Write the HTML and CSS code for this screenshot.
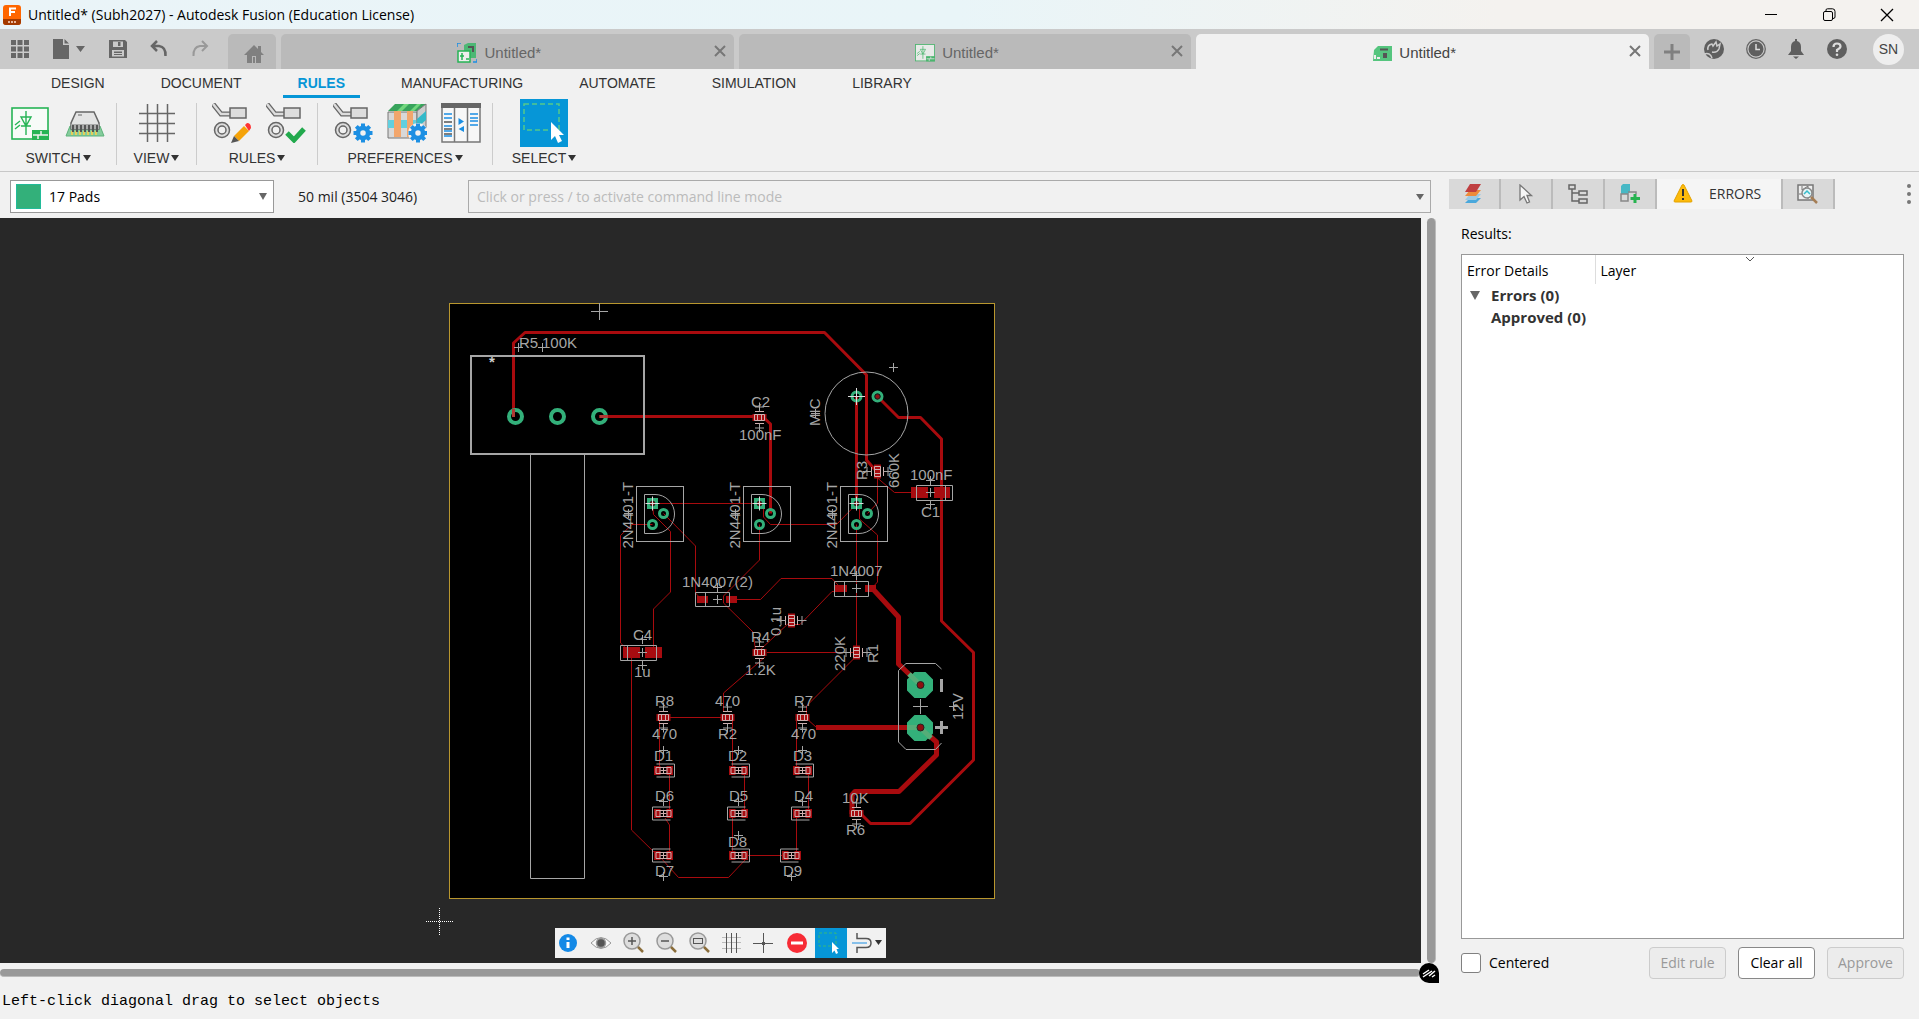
FILE: index.html
```html
<!DOCTYPE html>
<html lang="en">
<head>
<meta charset="utf-8">
<title>Untitled* (Subh2027) - Autodesk Fusion (Education License)</title>
<link rel="stylesheet" href="styles.css">
</head>
<body>
<svg class="defs" aria-hidden="true">
  <defs>
    <g id="gear"><circle r="5" fill="none" stroke="#1c8fe3" stroke-width="4.5"/><g stroke="#1c8fe3" stroke-width="4"><path d="M0-9.500V-6M0 6V9.500M-9.500 0H-6M6 0H9.500M-6.700-6.700L-4.300-4.300M6.700 6.700L4.300 4.300M-6.700 6.700L-4.300 4.300M6.700-6.700L4.300-4.300"/></g></g>
    <g id="trace-pad"><path d="M1 1L9 11H19" fill="none" stroke="#666" stroke-width="5"/><path d="M1 1L9 11H19" fill="none" stroke="#ddd" stroke-width="2.500"/><rect x="18" y="5" width="16" height="10" fill="#ddd" stroke="#666" stroke-width="1.500"/><circle cx="10" cy="27" r="7.500" fill="#ddd" stroke="#666" stroke-width="1.500"/><circle cx="10" cy="27" r="4" fill="#f1f1f1" stroke="#666" stroke-width="1.500"/></g>
    <g id="schematic"><rect x="1" y="1" width="36" height="31" fill="#f7fbf8" stroke="#26b455" stroke-width="1.600"/><path d="M15 4V28M10 10H20L15 19ZM10 19H20M9 14L4 18M9 18L4 22" fill="none" stroke="#26b455" stroke-width="1.400"/><rect x="21" y="23" width="17" height="10" fill="#26b455"/><path d="M22 28H37M30 24V28M27 28V32" stroke="#f1f1f1" stroke-width="1.500"/></g>
    <g id="cross"><path d="M-4.500 0H4.500M0-4.500V4.500"/></g>
    <g id="smd"><rect class="copper" x="-7" y="-3.500" width="14" height="7"/><path class="body" d="M-5-3H5V3H-5ZM-2-3V3M2-3V3M-4.500-6H4.500M-4.500 6H4.500"/><use href="#cross" y="-10.500"/><use href="#cross" y="10.500"/></g>
    <g id="led"><path class="copper" d="M-9.500-4.500H-3V4.500H-9.500ZM3-4.500H9.500V4.500H3Z"/><path class="body" d="M-7.500-3H7.500V3H-7.500ZM-3.500-3V3M3.500-3V3M-3 0H3M0-3V3"/><path d="M-7-6.500H11V6.500H-7"/></g>
    <g id="transistor"><rect x="-16" y="-17" width="47" height="55"/><path d="M2.500-9H-8V30H2.500A19.500 19.500 0 0 0 2.500-9Z"/><g class="ring small"><circle cx="11" cy="10" r="4"/><circle cy="21" r="4"/></g><rect class="pad" x="-5.500" y="-5.500" width="11" height="11"/><circle class="hole" r="2.500"/><path class="bright" d="M-7 0H7M0-7V7"/><use href="#cross" x="-24" y="10"/><text transform="translate(-20 45) rotate(-90)">2N4401-T</text></g>
    <g id="lens"><circle cx="10" cy="10" r="8" fill="#ddd" stroke="#999" stroke-width="1.500"/><path d="M16 16L21 21" stroke="#8a6d3b" stroke-width="2.500"/></g>
  </defs>
</svg>

<header>
  <div class="titlebar">
    <svg class="logo" width="18" height="20" viewBox="0 0 18 20"><rect width="18" height="20" rx="3" fill="#f60"/><path d="M0 14H18V17Q18 20 15 20H3Q0 20 0 17Z" fill="#a33a00"/><path d="M7 11V3.500H13M7 7H12" stroke="#fff" stroke-width="2" fill="none"/><path d="M5 17H13" stroke="#e8b79c" stroke-width="2" stroke-dasharray="2 1"/></svg>
    <h1>Untitled* (Subh2027) - Autodesk Fusion (Education License)</h1>
    <button aria-label="Minimize"><svg width="14" height="14"><path d="M1 6.500H13" stroke="#000"/></svg></button>
    <button aria-label="Restore"><svg width="14" height="14" fill="none" stroke="#000"><rect x="1.500" y="3.500" width="9" height="9" rx="1.500"/><path d="M4 3V2Q4 .8 5.500 .8H10.500Q13 .8 13 3.500V9Q13 10.500 11 10.500"/></svg></button>
    <button aria-label="Close"><svg width="14" height="14"><path d="M1 1L13 13M13 1L1 13" stroke="#000" stroke-width="1.300"/></svg></button>
  </div>

  <div class="tabbar">
    <div class="quick">
      <button aria-label="Data panel"><svg width="18" height="18" fill="#666"><path d="M0 0H5V5H0ZM6.500 0H11.500V5H6.500ZM13 0H18V5H13ZM0 6.500H5V11.500H0ZM6.500 6.500H11.500V11.500H6.500ZM13 6.500H18V11.500H13ZM0 13H5V18H0ZM6.500 13H11.500V18H6.500ZM13 13H18V18H13Z"/></svg></button>
      <button aria-label="File"><svg width="34" height="20" fill="#666"><path d="M1 0H11V6H17V20H1ZM12.500 0L17 4.500H12.500ZM24 7H33L28.500 13Z"/></svg></button>
      <button aria-label="Save"><svg width="18" height="18" fill="#666"><path fill-rule="evenodd" d="M0 0H16L18 2V18H0ZM4 1.500V7H14V1.500ZM3 10V16.500H15V10ZM9 2H11.500V6H9ZM5 11.500H13V13H5ZM5 14H13V15H5Z"/></svg></button>
      <button aria-label="Undo"><svg width="18" height="18" fill="none" stroke="#666" stroke-width="2.500"><path d="M7 1L2 6L7 11M2 6H9Q16 7 15.500 16"/></svg></button>
      <button aria-label="Redo"><svg width="18" height="18" fill="none" stroke="#999" stroke-width="2"><path d="M11 1L16 6L11 11M16 6H9Q2 7 2.500 16"/></svg></button>
    </div>
    <button class="home" aria-label="Home"><svg width="20" height="18" fill="#808080"><path d="M10 0L14 4V1H17V7L20 10H17V18H12V11H8V18H3V10H0ZM9 12H11V18H9Z"/></svg></button>
    <div class="tab"><span><svg width="20" height="20"><path d="M7 2L11 0H19V15H7Z" fill="#4db875"/><path d="M11 4H16V9" stroke="#555" stroke-width="2" fill="none"/><rect x="1" y="8" width="12" height="11" fill="#eee" stroke="#26b455" stroke-width="1.500"/><path d="M5 10V17M3 13H7M9 16H12" stroke="#26b455" stroke-width="1.500"/><path d="M0 4V0H4M20 16V19H16" stroke="#1c8fe3" stroke-width="1.500" fill="none"/></svg>Untitled*</span><button aria-label="Close tab"><svg width="12" height="12"><path d="M1 1L11 11M11 1L1 11"/></svg></button></div>
    <div class="tab"><span><svg width="20" height="18" viewBox="0 0 38 34" opacity=".75"><use href="#schematic"/></svg>Untitled*</span><button aria-label="Close tab"><svg width="12" height="12"><path d="M1 1L11 11M11 1L1 11"/></svg></button></div>
    <div class="tab active"><span><svg width="19" height="15"><path d="M1 4L5 0H19V15H0Z" fill="#55c57e"/><path d="M7 3.500H15" stroke="#555" stroke-width="2"/><path d="M10 7H14V12H10Z" fill="#555"/><path d="M1 9H3V13H1ZM4 11H7V13H4Z" fill="#eee"/></svg>Untitled*</span><button aria-label="Close tab"><svg width="12" height="12"><path d="M1 1L11 11M11 1L1 11"/></svg></button></div>
    <button class="add" aria-label="New tab"><svg width="18" height="18"><path d="M9 1V17M1 9H17" stroke="#808080" stroke-width="3"/></svg></button>
    <div class="account">
      <button aria-label="Extensions"><svg width="20" height="20"><circle cx="10" cy="10" r="10" fill="#5f5f5f"/><path d="M0 15Q6 13 8 19" stroke="#ccc" stroke-width="1.500" fill="none"/><path d="M4 11Q3 6 8 5L9 7L12 3L13 7L16 5L15 10Q13 14 8 13" stroke="#ccc" stroke-width="1.500" fill="none"/></svg></button>
      <button aria-label="Job status"><svg width="20" height="20"><circle cx="10" cy="10" r="9.300" fill="none" stroke="#666" stroke-width="1.300"/><circle cx="10" cy="10" r="7.500" fill="#5f5f5f"/><path d="M10 5V10.500H14" stroke="#ddd" stroke-width="1.500" fill="none"/></svg></button>
      <button aria-label="Notifications"><svg width="18" height="20" fill="#5f5f5f"><path d="M8 2V0H10V2Q14 3 14 8V12L17 16H1L4 12V8Q4 3 8 2ZM6 17.500H12L9 20Z"/></svg></button>
      <button aria-label="Help"><svg width="20" height="20"><circle cx="10" cy="10" r="10" fill="#5f5f5f"/><path d="M6.500 8Q6.500 4.500 10 4.500T13.500 7.500Q13.500 9 10 11V13" stroke="#ddd" stroke-width="2.200" fill="none"/><circle cx="10" cy="15.800" r="1.300" fill="#ddd"/></svg></button>
      <button class="avatar">SN</button>
    </div>
  </div>

  <nav>
    <a href="#design">DESIGN</a><a href="#document">DOCUMENT</a><a href="#rules" class="current">RULES</a><a href="#manufacturing">MANUFACTURING</a><a href="#automate">AUTOMATE</a><a href="#simulation">SIMULATION</a><a href="#library">LIBRARY</a>
  </nav>

  <div class="ribbon">
    <section class="g-switch">
      <div>
        <button aria-label="Schematic"><svg width="40" height="40"><g transform="translate(0 4)"><use href="#schematic"/></g></svg></button>
        <button aria-label="Package"><svg width="40" height="40"><path d="M5 23H35L39 33H1Z" fill="#84cc9c" stroke="#5eb37b"/><path d="M6 30H34" stroke="#e5cf5b" stroke-width="4" stroke-dasharray="2 2"/><path d="M11 9H29L34 20V26H6V20Z" fill="#e4e4e4" stroke="#666" stroke-width="1.500"/><path d="M6 21H34V26H6Z" fill="#aaa"/><path d="M8 22V29M12 22V29M16 22V29M20 22V29M24 22V29M28 22V29M32 22V29" stroke="#555" stroke-width="2"/><path d="M13 12H17" stroke="#666"/></svg></button>
      </div>
      <button class="menu">SWITCH<i></i></button>
    </section>
    <section class="g-view">
      <div><button aria-label="Grid"><svg width="40" height="40"><path d="M10.500 1V39M20.500 1V39M30.500 1V39M2 10.500H38M2 20.500H38M2 30.500H38" stroke="#666" stroke-width="1.500"/></svg></button></div>
      <button class="menu">VIEW<i></i></button>
    </section>
    <section class="g-rules">
      <div>
        <button aria-label="Edit rules"><svg width="40" height="40"><use href="#trace-pad"/><path d="M22 33L32 23L37 28L27 38Z" fill="#f5a30a"/><path d="M33 22L35 20Q39 20 39 25L37 28Z" fill="#f33"/><path d="M22 33L27 38L19 40Z" fill="#555"/></svg></button>
        <button aria-label="Check rules"><svg width="40" height="40"><use href="#trace-pad"/><path d="M21 30L28 37L38 26" stroke="#22a94d" stroke-width="5" fill="none"/></svg></button>
      </div>
      <button class="menu">RULES<i></i></button>
    </section>
    <section class="g-prefs">
      <div>
        <button aria-label="Rule preferences"><svg width="40" height="40"><use href="#trace-pad"/><use href="#gear" x="30" y="30"/></svg></button>
        <button aria-label="Layer stack"><svg width="40" height="40"><path d="M1 9H30V35H1Z" fill="#d8d8d8" stroke="#777"/><path d="M1 17H30V25H1Z" fill="#61cfdf"/><path d="M1 8L8 1H39L30 8Z" fill="#38a45c"/><path d="M10 8L17 1H22L15 8ZM23 8L30 1H34L27 8Z" fill="#72d77e"/><path d="M30 8L39 1V28L30 35Z" fill="#ccc" stroke="#777"/><path d="M30 16L39 8V17L30 25Z" fill="#33b9c9"/><path d="M7 8H14V34H7ZM20 8H26V34H20Z" fill="#f2a66c"/><circle cx="31" cy="30" r="10" fill="#f1f1f1"/><use href="#gear" x="31" y="30"/></svg></button>
        <button aria-label="Design manager"><svg width="40" height="40"><path d="M1 1H39V39H1Z" fill="#f7f7f7" stroke="#777" stroke-width="1.500"/><path d="M0 0H40V5H0Z" fill="#666"/><path d="M13.500 5V39M26.500 5V39" stroke="#777" stroke-width="1.500"/><path d="M3 11H11M3 15H11M3 23H11M3 28H11M3 33H11M29 11H37M29 15H37M29 18H37M29 22H37" stroke="#1c8fe3" stroke-width="1.500"/><path d="M3 19H11M3 26H11M3 31H11" stroke="#555" stroke-width="1.500"/><path d="M17.500 15L23 18.500L17.500 22ZM23 23V29L17.500 26Z" fill="#1c8fe3"/></svg></button>
      </div>
      <button class="menu">PREFERENCES<i></i></button>
    </section>
    <section class="g-select">
      <div><button class="selected" aria-label="Select"><svg width="48" height="48"><rect x="4" y="5" width="35" height="26" fill="none" stroke="#55c98a" stroke-width="1.500" stroke-dasharray="5 3"/><path d="M31 23V41L35 37L38 44L42 42L39 36H44Z" fill="#fff"/></svg></button></div>
      <button class="menu">SELECT<i></i></button>
    </section>
  </div>
</header>

<main>
  <div class="workspace">
    <div class="command">
      <label class="layer"><b></b><select aria-label="Layer"><option>17 Pads</option></select></label>
      <output>50 mil (3504 3046)</output>
      <div class="cli"><input aria-label="Command line" placeholder="Click or press / to activate command line mode"><i></i></div>
    </div>
    <div class="viewport">
      <div class="canvas">
        <svg class="board" viewBox="0 218 1421 745" role="img" aria-label="Circuit board layout">
          <rect x="449.500" y="303.500" width="545" height="595" fill="#000" stroke="#b8962e"/>
          <g class="wire">
            <path d="M652.500 503.500H759.500M652.500 503.500L653.500 514.500L670.500 531.500V592L653.500 609V650M652.500 524.500H632L620.500 535.500V643L630 652M663.500 513.500L695.500 546V593L702 600"/>
            <path d="M759.500 503.500L763.500 508V517L770.500 524.500H836.500L856.500 504M759.500 524.500V560L723.500 596V603L753 632L755.500 650M877.500 478L894.500 492.500H912M877.500 477V503L867.500 513.500M856.500 506L859.500 509V519L877.500 535V582L872 588M856.500 524.500V652"/>
            <path d="M737 599.500H760.500L781 578.500H832L838 585M791 624.500H800L832 591.500H838M760 650L791.500 620.500M767 652.500H856M765 657L723.500 693V712M856.500 656L806.500 706V714M806 718L816.500 727.500M631.500 656V830L657 855"/>
            <path d="M663.500 717.500H728M659.500 717V768M669.500 772V812M665 818L669.500 825V855M661 858L678.500 877.500H728.500L746 859M732.500 717V768M744.500 772V812M732.500 816V855M746 855.500H784M796.500 717V768M808.500 772V812M796.500 816V853"/>
          </g>
          <g class="wire medium">
            <path d="M513.500 416.500V343L525 332.500H824.500L866.500 375V460L877 472M599.500 416.500H757M762 416L770.500 424V513.500M856.500 396.500V503.500"/>
            <path d="M877.500 396.500L898.500 417.500H920.500L941.500 439V621L973.500 652.500V760L910 823.500H870.500L859 812"/>
          </g>
          <path class="wire thick" d="M872 588L898.500 617V664L920.500 685M816 727.500H920L936.500 742V755L899 791.500H855L852 795V814"/>
          <g class="silk">
            <g class="ring"><circle cx="515.500" cy="416.500" r="6.500"/><circle cx="557.500" cy="416.500" r="6.500"/><circle cx="599.500" cy="416.500" r="6.500"/></g>
            <path class="wire medium over" d="M513.500 409V417M599.500 416.500H608"/>
            <path d="M599.500 303V320M591 311.500H608M530.500 454V878.500H584.500V454"/>
            <rect class="heavy" x="471" y="356" width="173" height="98"/>
            <use href="#cross" x="518.500" y="347.500"/><use href="#cross" x="542.500" y="347.500"/>
            <text x="519" y="348">R5</text><text x="542" y="348">100K</text><text class="pin" x="489" y="367">*</text>

            <use href="#transistor" x="652.500" y="503.500"/><use href="#transistor" x="759.500" y="503.500"/><use href="#transistor" x="856.500" y="503.500"/>

            <circle cx="866.500" cy="413.500" r="41.500"/><use href="#cross" x="893.500" y="367.500"/><use href="#cross" x="815.500" y="413.500"/>
            <g class="ring mic"><circle cx="856.500" cy="396.500" r="4.500"/><circle cx="877.500" cy="396.500" r="4.500"/></g>
            <circle class="hole" cx="877.500" cy="396.500" r="2.500"/><path class="bright" d="M848 396.500H865M856.500 388V405"/>
            <text transform="translate(820 426) rotate(-90)">MIC</text>
            <use href="#smd" transform="translate(877.500 471.500) rotate(90)"/>
            <text transform="translate(867 480) rotate(-90)">R3</text><text transform="translate(899 488) rotate(-90)">660K</text>
            <use href="#smd" x="759.500" y="417.500"/><text x="751" y="407">C2</text><text x="739" y="440">100nF</text>
            <path class="copper" d="M911 487H928V498H911ZM934 487H950V498H934Z"/><path d="M916.500 485.500H952.500V500.500H916.500ZM945.500 485.500V500.500"/>
            <use href="#cross" x="930.500" y="480.500"/><use href="#cross" x="930.500" y="492.500"/><use href="#cross" x="930.500" y="504.500"/><text x="910" y="480">100nF</text><text x="921" y="517">C1</text>

            <path class="copper" d="M834 585H847V592H834ZM865 585H876V592H865ZM697 596H708V603H697ZM726 596H737V603H726Z"/>
            <path d="M834.500 581.500H868.500V596.500H834.500ZM844.500 581.500V596.500M695.500 592.500H729.500V606.500H695.500ZM705.500 592.500V606.500"/>
            <use href="#cross" x="856.500" y="588.500"/><use href="#cross" x="856.500" y="575.500"/><use href="#cross" x="717.500" y="599.500"/><use href="#cross" x="717.500" y="587.500"/>
            <text x="830" y="576">1N4007</text><text x="682" y="587">1N4007(2)</text>
            <use href="#smd" transform="translate(791.500 620.500) rotate(90)"/><text transform="translate(781 636) rotate(-90)">0.1u</text>
            <use href="#smd" x="759.500" y="652.500"/><text x="751" y="642">R4</text><text x="745" y="675">1.2K</text>
            <use href="#smd" transform="translate(856.500 652.500) rotate(90)"/><text transform="translate(878 663) rotate(-90)">R1</text><text transform="translate(845 671) rotate(-90)">220K</text>
            <path class="copper" d="M623 647H640V658H623ZM645 647H662V658H645Z"/><path d="M620.500 645.500H656.500V660.500H620.500ZM627.500 645.500V660.500"/>
            <use href="#cross" x="642.500" y="639.500"/><use href="#cross" x="642.500" y="652.500"/><use href="#cross" x="642.500" y="665.500"/><text x="633" y="640">C4</text><text x="634" y="677">1u</text>

            <use href="#smd" x="663.500" y="717.500"/><use href="#smd" x="727.500" y="717.500"/><use href="#smd" x="802.500" y="717.500"/><use href="#smd" x="856.500" y="813.500"/>
            <text x="655" y="706">R8</text><text x="652" y="739">470</text><text x="715" y="706">470</text><text x="718" y="739">R2</text><text x="794" y="706">R7</text><text x="791" y="739">470</text><text x="842" y="803">10K</text><text x="846" y="835">R6</text>
            <use href="#led" x="663.500" y="770.500"/><use href="#led" x="738.500" y="770.500"/><use href="#led" x="802.500" y="770.500"/>
            <use href="#led" transform="translate(663.500 813.500) scale(-1 1)"/><use href="#led" transform="translate(738.500 813.500) scale(-1 1)"/><use href="#led" transform="translate(802.500 813.500) scale(-1 1)"/>
            <use href="#led" transform="translate(663.500 855.500) scale(-1 1)"/><use href="#led" x="738.500" y="855.500"/><use href="#led" transform="translate(791.500 855.500) scale(-1 1)"/>
            <use href="#cross" x="663.500" y="750.500"/><use href="#cross" x="738.500" y="750.500"/><use href="#cross" x="802.500" y="750.500"/><use href="#cross" x="663.500" y="801.500"/><use href="#cross" x="738.500" y="801.500"/><use href="#cross" x="802.500" y="801.500"/><use href="#cross" x="663.500" y="876.500"/><use href="#cross" x="738.500" y="835.500"/><use href="#cross" x="791.500" y="876.500"/>
            <text x="654" y="761">D1</text><text x="728" y="761">D2</text><text x="793" y="761">D3</text><text x="655" y="801">D6</text><text x="729" y="801">D5</text><text x="794" y="801">D4</text><text x="655" y="876">D7</text><text x="728" y="847">D8</text><text x="783" y="876">D9</text>

            <path d="M941.500 669L935.500 663.500H906L898.500 670.500V742L906 749.500H935.500L941.500 743M913 706.500H928M920.500 699V714"/>
            <path class="pad" d="M914.500 672H925.500L933 679.500V690.500L925.500 698H914.500L907 690.500V679.500ZM914.500 715H925.500L933 722.500V733.500L925.500 741H914.500L907 733.500V722.500Z"/>
            <path class="through" d="M909 674L920.500 685M907 727.500H920L931 738"/>
            <circle class="hole" cx="920.500" cy="685" r="3.500"/><circle class="hole" cx="920.500" cy="727.500" r="3.500"/>
            <path class="mark" d="M941.500 679V692M941.500 721V734M935 727.500H948"/>
            <use href="#cross" x="953.500" y="706.500"/><text transform="translate(963 720) rotate(-90)">12V</text>
            <path class="pointer" d="M426 921.500H453M439.500 908V935"/>
          </g>
        </svg>
        <div class="float">
          <div>
            <button aria-label="Info"><svg width="24" height="24"><circle cx="12" cy="12" r="9" fill="#1489e6"/><path d="M12 11V17M12 6.500V9" stroke="#fff" stroke-width="3"/></svg></button>
            <button aria-label="Visibility"><svg width="24" height="24"><path d="M2 12Q12 1 22 12Q12 23 2 12Z" fill="#f8f8f8" stroke="#999"/><circle cx="12" cy="12" r="4.500" fill="#555" stroke="#999" stroke-width="1.500"/></svg></button>
            <button aria-label="Zoom in"><svg width="24" height="24"><use href="#lens" x="1"/><path d="M7 10H15M11 6V14" stroke="#555" stroke-width="1.500"/></svg></button>
            <button aria-label="Zoom out"><svg width="24" height="24"><use href="#lens" x="1"/><path d="M7 10H15" stroke="#555" stroke-width="1.500"/></svg></button>
            <button aria-label="Zoom to fit"><svg width="24" height="24"><use href="#lens" x="1"/><rect x="6.500" y="7.500" width="9" height="5" fill="none" stroke="#555"/></svg></button>
            <button aria-label="Grid"><svg width="24" height="24"><path d="M2 6.500H21M2 11.500H21M2 17.500H21" stroke="#bbb"/><path d="M6.500 2V22M11.500 2V22M16.500 2V22" stroke="#555"/></svg></button>
            <button aria-label="Mark origin"><svg width="24" height="24"><path d="M1 12.500H21M11.500 2V22" stroke="#555"/><path d="M10 11H13V14H10Z" fill="#555"/></svg></button>
            <button aria-label="Stop"><svg width="24" height="24"><circle cx="12" cy="12" r="10" fill="#f72b35"/><path d="M6 12H18" stroke="#fff" stroke-width="3"/></svg></button>
          </div>
          <button class="selected" aria-label="Select"><svg width="32" height="30"><rect x="4" y="5" width="17" height="13" fill="none" stroke="#36b97c" stroke-dasharray="3 2"/><path d="M17 14V25L19.500 22.500L21 26L23 25L21.500 21H24Z" fill="#fff"/></svg></button>
          <button class="route" aria-label="Routing"><svg width="32" height="24"><path d="M6 2V7.500H15Q20 7.500 20 12T15 16.500H6V22" fill="none" stroke="#555" stroke-width="1.500"/><path d="M1 12H16" stroke="#1c8fe3"/><path d="M24 9H31L27.500 14Z" fill="#333"/></svg></button>
        </div>
        <span class="badge"><svg width="20" height="20"><path d="M20 20V10A10 10 0 1 0 10 20Z" fill="#000"/><path d="M4 11L10 7M4 14L13 8M10 13L16 8M13 14L16 12" stroke="#fff" stroke-width="1.500"/></svg></span>
      </div>
      <div class="vscroll"></div>
    </div>
    <div class="hscroll"></div>
    <footer>Left-click diagonal drag to select objects</footer>
  </div>

  <aside>
    <div class="panes">
      <button aria-label="Display layers"><svg width="20" height="20"><path d="M6 14H17L12 19H1Z" fill="#4aa8dc"/><path d="M6 10H17L12 16H1Z" fill="#9cc9e4"/><path d="M6 6H17L12 12H1Z" fill="#ed8b3b"/><path d="M6 0H17L12 8H1Z" fill="#bf3e40"/></svg></button>
      <button aria-label="Selection filter"><svg width="20" height="20"><path d="M4 1V16L8 12.500L11 19L13.500 18L11 11.500H15.500Z" fill="#f7f7f7" stroke="#777" stroke-width="1.300"/></svg></button>
      <button aria-label="Design tree"><svg width="20" height="20" fill="none" stroke="#666" stroke-width="1.500"><path d="M1 1H7V5H1ZM11 7H19V11H11ZM11 15H19V19H11ZM4 5V17H11M4 9H11"/></svg></button>
      <button aria-label="Inspector"><svg width="20" height="20"><path d="M1 2L3 0H10V8L8 10H1Z" fill="#48b8c5"/><path d="M1 10H8V17H1ZM8 8H16V10" fill="none" stroke="#888" stroke-width="1.500"/><path d="M15 10V19M10.500 14.500H20" stroke="#27b34f" stroke-width="3"/></svg></button>
      <button class="active"><svg width="20" height="20"><path d="M9 1Q10 0 11 1L19 17Q19 18 18 18H2Q1 18 1 17Z" fill="#fdbb0b" stroke="#e3a100"/><path d="M10 5V12M10 14V16" stroke="#333" stroke-width="2"/></svg>ERRORS</button>
      <button aria-label="Design preview"><svg width="22" height="20"><path d="M1 1H16V16H1Z" fill="#eee" stroke="#777" stroke-width="1.500"/><path d="M5 2L5 6L11 2V15M2 10H8" stroke="#777" fill="none"/><circle cx="10" cy="9" r="5" fill="#e7f4f6" stroke="#888" stroke-width="1.500"/><path d="M7 10L10 7L13 10" stroke="#36bccb" stroke-width="1.500" fill="none"/><path d="M14 13L20 19" stroke="#a57e55" stroke-width="2.500"/></svg></button>
      <button class="more" aria-label="More"><svg width="6" height="22" fill="#777"><circle cx="3" cy="3" r="2"/><circle cx="3" cy="11" r="2"/><circle cx="3" cy="19" r="2"/></svg></button>
    </div>
    <h2>Results:</h2>
    <div class="results">
      <svg class="sort" width="10" height="6"><path d="M1 1L5 5L9 1" fill="none" stroke="#555"/></svg>
      <table>
        <thead><tr><th>Error Details</th><th>Layer</th></tr></thead>
        <tbody><tr><td colspan="2"><i></i>Errors (0)</td></tr><tr><td colspan="2">Approved (0)</td></tr></tbody>
      </table>
    </div>
    <div class="actions">
      <label><input type="checkbox">Centered</label>
      <button disabled>Edit rule</button><button>Clear all</button><button disabled>Approve</button>
    </div>
  </aside>
</main>
</body>
</html>
```
FILE: styles.css
```css
* { box-sizing: border-box; }
body {
  margin: 0;
  height: 100vh;
  display: flex;
  flex-direction: column;
  background: #f1f1f1;
  color: #000;
  font: 14px/20px "Open Sans", "Noto Sans", sans-serif;
  overflow: hidden;
}
button { border: 0; padding: 0; margin: 0; background: none; font: inherit; color: inherit; display: flex; align-items: center; justify-content: center; }
svg { display: block; flex: none; }
.defs { position: absolute; width: 0; height: 0; }

/* window title */
.titlebar { display: flex; align-items: center; height: 29px; padding: 0 3px; background: linear-gradient(90deg, #eaf4f8, #e9f5f8 50%, #f4f2ef 78%, #f4f2ef); }
.titlebar h1 { flex: 1; margin: 0 0 0 7px; font-size: 14px; font-weight: 400; line-height: 20px; }
.titlebar button { width: 58px; height: 29px; }

/* document tabs */
.tabbar { display: flex; height: 40px; padding: 5px 0 0; gap: 5px; background: #cacaca; font-family: "Liberation Sans", Arial, sans-serif; }
.quick { display: flex; align-items: center; width: 223px; padding: 0 0 5px 11px; }
.quick button { margin-right: 23px; }
.home, .tab, .add { background: #bababa; border-radius: 5px 5px 0 0; }
.home { width: 48px; padding: 4px 0 0 3px; }
.tab { flex: 1; display: flex; align-items: center; color: #666; font-size: 15px; padding-bottom: 1px; }
.tab span { flex: 1; display: flex; align-items: center; justify-content: center; gap: 7px; padding: 4px 0 0 12px; }
.tab button { width: 28px; stroke: #777; stroke-width: 2; }
.tab.active { background: #f1f1f1; color: #444; }
.add { width: 36px; }
.account { display: flex; align-items: center; width: 224px; padding: 0 15px 5px 9px; color: #444; justify-content: space-between; }
.avatar { width: 31px; height: 31px; margin-left: 5px; border-radius: 50%; background: #eee; font-size: 14px; }

/* workspace menu */
nav { display: flex; gap: 26px; height: 29px; padding-left: 36px; font: 14px/28px "Liberation Sans", Arial, sans-serif; }
nav a { padding: 0 15px; height: 29px; color: #333; text-decoration: none; border-bottom: 3px solid transparent; }
nav .current { color: #0696d7; font-weight: 700; border-color: #0696d7; }

.ribbon { display: flex; height: 74px; border-bottom: 1px solid #c8c8c8; }
.ribbon section { display: flex; flex-direction: column; align-items: center; margin: 5px 0; height: 62px; border-right: 1px solid #ccc; }
.ribbon section > div { flex: none; display: flex; align-items: center; height: 40px; gap: 14px; }
.ribbon section:last-child { border: 0; }
.g-switch { width: 117px; }
.g-view { width: 80px; }
.g-rules { width: 121px; }
.g-prefs { width: 175px; }
.g-rules > div, .g-prefs > div { padding-left: 4px; }
.g-select { width: 102px; }
.menu { flex: none; gap: 2px; height: 20px; margin-top: 5px; font: 14px/20px "Liberation Sans", Arial, sans-serif; color: #333; }
i { border: 4px solid transparent; border-top: 6px solid #333; border-bottom: 0; }
.selected { background: #0696d7; }

main { flex: 1; display: flex; min-height: 0; }
.workspace { flex: 1; display: flex; flex-direction: column; min-width: 0; }
.command { display: flex; align-items: center; height: 46px; padding: 3px 9px 0 10px; }
.layer { position: relative; display: flex; align-items: center; width: 264px; height: 33px; padding-left: 5px; background: #fff; border: 1px solid #999; }
.layer b { width: 25px; height: 25px; background: #33b07a; border: 1px solid #2b9; }
.layer select { flex: 1; height: 30px; border: 0; padding: 0 8px; background: none; font: inherit; appearance: none; }
.layer::after { content: ""; width: 0; margin-right: 6px; border: 4px solid transparent; border-top: 7px solid #666; border-bottom: 0; }
output { width: 170px; margin-left: 24px; color: #222; }
.cli { flex: 1; display: flex; align-items: center; height: 33px; border: 1px solid #aaa; padding: 0 6px 0 8px; }
.cli i { border-top-color: #666; }
.cli input { flex: 1; padding: 0; border: 0; background: none; font: inherit; outline: 0; }
.cli input::placeholder { color: #bbb; opacity: 1; }
.viewport { flex: 1; display: flex; min-height: 0; }
.canvas { position: relative; flex: 1; background: #282828; }
.board { width: 100%; height: 100%; }
.vscroll { width: 9px; margin: 0 4px 0 6px; border-radius: 5px; background: #999; border-right: 1px solid #bbb; }
.hscroll { height: 8px; margin: 6px 20px 0 0; border-radius: 4px; background: #999; border-bottom: 1px solid #bbb; }
footer { height: 42px; padding: 15px 2px 0; font: 15px/20px "Liberation Mono", "Courier New", monospace; }
.badge { position: absolute; right: -18px; bottom: -20px; }
.float { position: absolute; left: 555px; bottom: 5px; display: flex; align-items: center; width: 331px; height: 30px; background: #f1f1f1; }
.float > div { display: flex; justify-content: space-between; width: 253px; margin: 0 6px 0 1px; }
.route { flex: 1; }

/* board drawing */
.silk { fill: none; stroke: #a6a6a6; stroke-width: 1; }
.silk text, #transistor text { fill: #a6a6a6; stroke: none; font: 15px "Liberation Sans", Arial, sans-serif; }
.silk .pin { font-weight: 700; fill: #ccc; }
.wire { fill: none; stroke: #a80b0e; stroke-width: 1; stroke-linejoin: round; }
.medium { stroke-width: 3; }
.thick { stroke-width: 5; }
.over { stroke: #b03a35; }
.copper { fill: #a80c10; stroke: none; }
.body { stroke: #d0b0b0; }
.pad { fill: #33b07a; stroke: none; }
.ring { fill: none; stroke: #33b07a; stroke-width: 4; }
.small, .mic { stroke-width: 3; }
.hole { fill: #8d1010; stroke: #222; }
.bright { stroke: #ddd; }
.heavy { stroke-width: 2; }
.mark { stroke-width: 3; }
.through { stroke: #55ad78; stroke-width: 5; }
.pointer { stroke: #fff; stroke-dasharray: 1 1; }

/* errors panel */
aside { width: 479px; display: flex; flex-direction: column; padding: 7px 0 40px 9px; }
.panes { display: flex; height: 30px; }
.panes button { width: 52px; background: #d9d9d9; border-right: 2px solid #bbb; }
.panes .active { width: 126px; gap: 16px; padding-left: 16px; justify-content: flex-start; background: #f5f5f5; color: #333; }
.panes .more { width: 20px; margin-left: auto; background: none; border: 0; }
h2 { margin: 15px 0 10px 12px; font-size: 14px; font-weight: 400; line-height: 20px; }
.results { position: relative; flex: 1; margin: 0 15px 0 12px; border: 1px solid #999; background: #fff; }
.sort { position: absolute; left: 283px; top: 1px; }
table { width: 100%; border-collapse: collapse; table-layout: fixed; }
th { height: 29px; padding: 2px 5px 0; text-align: left; font-weight: 400; }
th:first-child { width: 133px; border-right: 1px solid #ddd; }
td { height: 22px; padding: 0 0 0 29px; font-size: 15px; font-weight: 700; color: #333; line-height: 22px; }
td i { float: left; margin: 7px 0 0 -21px; border-width: 9px 5px 0; border-top-color: #666; }
.actions { display: flex; height: 32px; margin: 8px 15px 0 12px; gap: 12px; }
.actions label { flex: 1; display: flex; align-items: center; gap: 8px; }
.actions input { appearance: none; width: 20px; height: 20px; margin: 0; border: 1px solid #808080; border-radius: 3px; background: #fff; }
.actions button { width: 77px; border: 1px solid #888; border-radius: 4px; background: #fff; }
.actions button:disabled { color: #999; background: #ececec; border-color: #ccc; }
```
